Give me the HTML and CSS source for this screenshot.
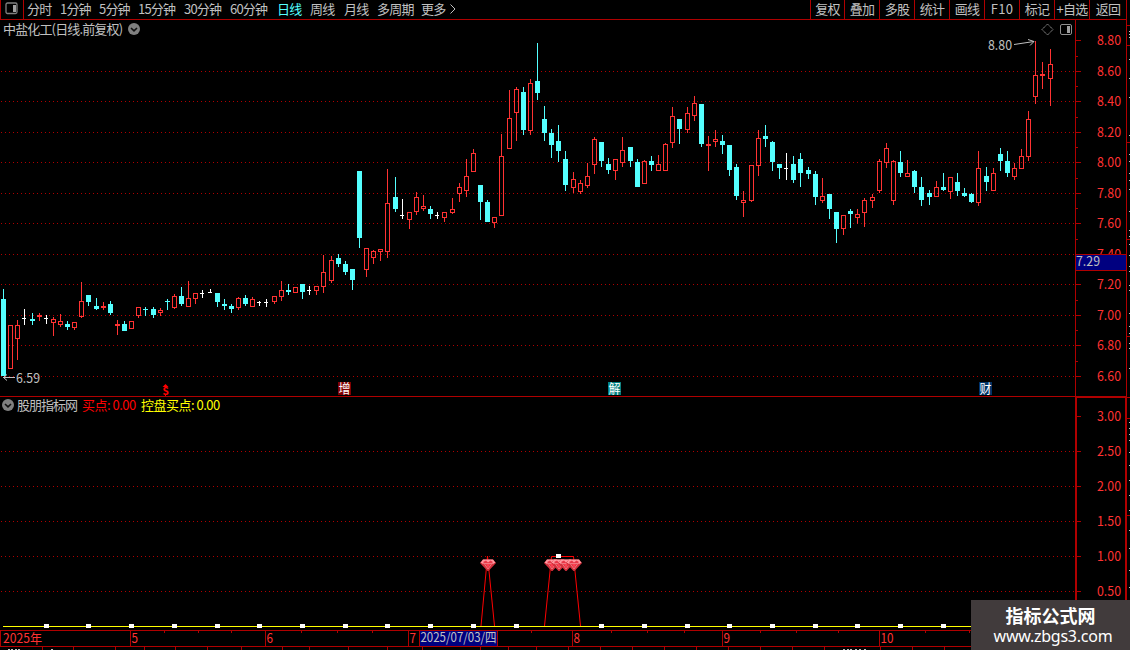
FILE: index.html
```html
<!DOCTYPE html>
<html lang="zh-CN">
<head>
<meta charset="utf-8">
<title>中盐化工 日线</title>
<link rel="stylesheet" href="styles.css">
</head>
<body>
<div class="terminal">
  <header class="toolbar">
    <div class="layout-toggle">
      <svg width="14" height="13" viewBox="0 0 14 13"><rect x="1" y="1" width="11" height="10.5" rx="1.5" fill="none" stroke="#808080" stroke-width="1.3"/><rect x="8" y="3" width="3" height="7" fill="#a0a0a0"/></svg>
    </div>
    <nav class="periods">
      <span>分时</span><span>1分钟</span><span>5分钟</span><span>15分钟</span><span>30分钟</span><span>60分钟</span><span class="active">日线</span><span>周线</span><span>月线</span><span>多周期</span><span class="more">更多<svg width="6" height="10" viewBox="0 0 6 10"><path d="M.5 .5L5 5L.5 9.500" fill="none" stroke="#c0c0c0"/></svg></span>
    </nav>
    <div class="tools">
      <span>复权</span><span>叠加</span><span>多股</span><span>统计</span><span>画线</span><span class="latin">F10</span><span>标记</span><span>+自选</span><span>返回</span>
    </div>
  </header>

  <section class="panel price">
    <svg id="price" class="plot" width="1130" height="377" viewBox="0 20 1130 377"></svg>
    <div class="panel-title">
      <span class="stock">中盐化工(日线.前复权)</span>
      <svg class="drop" width="12" height="12" viewBox="0 0 12 12"><circle cx="6" cy="6" r="6"/><path d="M3 5L6 7.800L9 5"/></svg>
    </div>
  </section>

  <section class="panel indicator">
    <svg id="signal" class="plot" width="1130" height="253" viewBox="0 397 1130 253"></svg>
    <div class="panel-title">
      <svg class="drop" width="12" height="12" viewBox="0 0 12 12"><circle cx="6" cy="6" r="6"/><path d="M3 5L6 7.800L9 5"/></svg>
      <span class="source">股朋指标网</span>
      <span class="buy">买点: 0.00</span>
      <span class="control">控盘买点: 0.00</span>
    </div>
  </section>

  <aside class="watermark">
    <strong>指标公式网</strong>
    <span>www.zbgs3.com</span>
  </aside>
</div>
<script src="chart.js"></script>
</body>
</html>
```
FILE: styles.css
```css
* { box-sizing: border-box; }
body {
  margin: 0;
  background: #000;
  color: #c0c0c0;
  font-family: "Noto Sans CJK SC", "Noto Sans", sans-serif;
  font-size: 13px;
  overflow: hidden;
}
.terminal {
  position: relative;
  width: 1130px;
  height: 650px;
  display: grid;
  grid-template-rows: 20px 377px 253px;
  overflow: hidden;
}
.toolbar {
  display: flex;
  width: 1127px;
  height: 20px;
  border-bottom: 1px solid #b00000;
  line-height: 17px;
  letter-spacing: -0.8px;
  white-space: nowrap;
}
.layout-toggle {
  width: 24px;
  padding: 2px 0 0 4px;
  border-left: 1px solid #b00000;
  border-right: 1px solid #b00000;
  line-height: 0;
}
.periods {
  display: grid;
  grid-template-columns: 33px 39px 39px 46px 46px 47px 33px 34px 33px 44px 40px;
  padding-left: 3px;
  flex: 1;
}
.active { color: #54ffff; }
.more { display: flex; gap: 5px; }
.more svg { margin-top: 4px; }
.tools {
  display: grid;
  grid-template-columns: 34px 35px 35px 35px 35px 35px 35px 35px 38px;
  text-align: center;
}
.tools span { border-left: 1px solid #b00000; }
.tools span:last-child { border-right: 1px solid #b00000; }
.tools .latin { letter-spacing: 0.3px; }
.panel { display: grid; }
.plot, .panel-title { grid-area: 1 / 1; }
.plot { display: block; }
.panel-title {
  display: flex;
  align-items: center;
  align-self: start;
  justify-self: start;
  height: 18px;
  line-height: 18px;
  letter-spacing: -0.8px;
  white-space: nowrap;
  z-index: 1;
}
.price .panel-title { padding-left: 3px; }
.stock { width: 125px; letter-spacing: -0.85px; }
.indicator .panel-title { padding-left: 2px; height: 16px; line-height: 16px; }
.drop circle { fill: #808080; }
.drop path { fill: none; stroke: #101010; stroke-width: 1.6; }
.source { width: 65px; margin-left: 3px; letter-spacing: -1px; }
.buy { width: 59px; color: #f00; letter-spacing: -0.5px; }
.control { color: #ff0; letter-spacing: -0.5px; }
.plot text { font-size: 13px; }
.scale { fill: #ff3232; }
.note { fill: #c0c0c0; }
.tag { fill: #fff; }
.frame { fill: #b00000; }
.grid { stroke: #b00000; stroke-dasharray: 1 3; shape-rendering: crispEdges; }
.up { fill: none; stroke: #ff3232; }
.up-fill { fill: #ff3232; }
.down-fill { fill: #54ffff; }
.flat-fill { fill: #fff; }
.arrow { fill: none; stroke: #c0c0c0; }
.signal-line { fill: none; stroke: #f00; }
.watermark {
  position: absolute;
  right: 0;
  bottom: 0;
  width: 159px;
  height: 50px;
  padding-top: 3px;
  background: #413b3c;
  color: #fff;
  text-align: center;
  z-index: 2;
}
.watermark strong { display: block; font-size: 18px; line-height: 24px; }
.watermark span { display: block; padding-left: 5px; font: 16px/18px "Noto Sans", sans-serif; letter-spacing: -0.25px; }
```
FILE: chart.js
```js
// Each candle: centre x, high, body top, body bottom, low, kind (r rising, c falling, w unchanged)
const candles = `3 289 299 376 376 c;10 325 325 369 369 r;17 320 325 339 360 r;24 309 318 319 325 w;32 313 319 321 325 c;39 313 315 317 321 r;46 315 318 319 324 w;53 317 319 323 336 r;60 314 321 325 327 r;67 321 324 327 330 c;74 322 322 328 330 r;81 282 301 317 318 r;88 295 295 302 306 c;96 298 306 309 310 c;103 302 306 308 310 r;110 301 304 313 315 c;117 320 324 326 335 r;124 321 324 331 331 c;131 321 321 329 329 r;138 307 307 316 318 r;145 307 309 310 316 c;153 307 309 315 318 c;160 308 310 313 316 r;167 299 301 302 310 c;174 294 296 308 309 r;181 287 296 304 306 c;188 281 298 307 307 r;195 293 293 299 304 r;202 290 293 294 298 w;210 289 292 293 293 w;217 293 293 302 307 c;224 299 304 306 310 c;231 304 306 309 313 c;238 297 298 308 310 r;245 295 298 304 306 c;252 297 299 307 307 r;259 301 302 303 306 w;266 299 302 303 307 w;274 296 296 302 304 r;281 281 290 297 301 r;288 284 290 292 295 c;295 287 287 293 293 r;302 284 284 292 299 c;309 286 290 291 295 w;316 286 286 291 295 r;323 255 272 287 293 r;331 256 260 281 283 r;338 254 258 264 267 c;345 261 264 272 275 c;352 269 269 280 290 c;359 171 171 238 248 c;366 248 248 270 277 r;373 250 251 258 264 r;380 249 249 252 261 r;387 169 203 252 258 r;395 177 197 209 212 c;402 199 215 216 219 w;409 212 212 220 229 r;416 192 197 212 215 r;423 195 206 209 211 r;430 206 209 214 219 c;437 212 215 216 219 w;444 212 212 218 222 r;452 198 209 213 214 r;459 183 187 194 202 r;466 159 176 191 197 r;473 149 153 172 172 r;480 185 185 202 220 c;487 200 202 222 222 c;494 217 217 223 228 r;501 134 156 216 216 r;509 90 118 149 149 r;516 87 89 113 141 r;523 87 92 130 135 c;530 79 83 131 135 r;537 43 81 93 100 c;544 106 119 133 141 c;551 129 133 145 158 c;558 125 141 151 162 c;565 151 159 185 191 c;573 172 179 188 193 r;580 180 183 192 194 r;587 163 176 186 188 r;594 137 139 165 174 r;601 142 142 161 167 c;608 158 164 170 174 c;615 159 159 171 180 r;622 137 150 163 167 r;630 147 147 161 167 c;637 159 162 187 187 c;644 160 161 184 184 r;651 156 161 165 171 c;658 155 164 171 171 r;665 143 144 171 171 r;672 107 116 143 148 r;679 119 119 129 144 c;687 107 113 130 133 r;694 96 103 116 121 r;701 104 104 144 147 c;708 136 144 146 171 r;715 130 139 142 147 r;722 135 141 145 154 c;729 145 145 170 176 c;736 164 167 196 200 c;743 191 200 203 217 r;751 165 165 201 202 r;758 130 138 166 176 r;765 125 136 139 147 c;772 141 142 162 171 c;779 164 164 168 179 c;786 153 168 169 180 w;793 156 164 180 183 c;800 153 159 173 187 c;808 167 170 174 179 c;815 171 174 197 205 c;822 178 196 201 203 r;829 194 194 209 219 c;836 212 212 229 243 c;843 215 215 229 235 r;850 209 211 214 228 c;857 209 214 218 224 r;864 198 200 213 227 r;872 194 197 201 208 r;879 159 161 191 193 r;886 143 148 163 168 r;893 160 161 201 205 r;900 151 162 173 177 c;907 160 173 177 177 r;914 170 171 187 193 c;921 177 187 200 206 c;929 190 193 197 205 c;936 181 187 197 197 r;943 173 187 190 191 c;950 177 177 192 199 r;957 173 182 191 196 c;964 188 193 196 197 c;971 193 194 202 203 c;978 151 168 203 206 r;986 167 176 182 191 c;993 168 173 191 191 r;1000 148 154 161 171 c;1007 151 161 173 177 c;1014 163 168 177 180 r;1021 149 156 169 169 r;1028 111 119 157 161 r;1035 41 75 97 104 r;1042 62 74 76 89 r;1050 49 64 79 106 r`;

const rect = (x, y, w, h, cls) => `<rect x="${x}" y="${y}" width="${w}" height="${h}" class="${cls}"/>`;
const text = (x, y, w, s, cls) => `<text x="${x}" y="${y}" class="${cls}" textLength="${w}" lengthAdjust="spacingAndGlyphs">${s}</text>`;
const dots = y => `<line class="grid" x1="1" x2="1074" y1="${y + .5}" y2="${y + .5}"/>`;

function candle(row) {
  const [x, hi, top, bot, lo] = row.split(' ').map(Number);
  const kind = row.slice(-1);
  if (kind === 'w') return rect(x, hi, 1, lo - hi, 'flat-fill') + rect(x - 2, top, 4, 1, 'flat-fill');
  if (kind === 'c') return rect(x, hi, 1, lo - hi, 'down-fill') + rect(x - 2, top, 5, bot - top, 'down-fill');
  let out = rect(x, hi, 1, top - hi, 'up-fill') + rect(x, bot, 1, lo - bot, 'up-fill');
  out += bot - top <= 2
    ? rect(x - 2, top, 5, 2, 'up-fill')
    : rect(x - 1.5, top + .5, 4, bot - top - 1, 'up');
  return out;
}

function stripMarks(reds, greys) {
  return reds.map(y => rect(1127, y, 3, 1, 'frame')).join('') +
    greys.map(y => rect(1129, y, 1, 1, 'note')).join('');
}

function drawPrice() {
  let s = '';
  const ys = [40, 71, 101, 132, 162, 193, 223, 254, 284, 315, 345, 376];
  s += rect(1075, 20, 1, 377, 'frame') + rect(1126, 20, 1, 377, 'frame') + rect(0, 396, 1127, 1, 'frame');
  ys.forEach((y, i) => {
    if (i) s += dots(y);
    s += rect(1076, y, 5, 1, 'frame');
    if (i < 11) s += rect(1076, Math.floor((y + ys[i + 1] + 1) / 2), 2, 1, 'frame');
    s += text(1097, y + 5, 24, (8.8 - i * .2).toFixed(2), 'scale');
  });
  s += rect(1075, 254, 52, 17, 'frame') + '<rect x="1076" y="255" width="50" height="15" fill="#000080"/>' + text(1076, 266, 24, '7.29', 'note');
  s += candles.split(';').map(candle).join('');
  s += text(988, 50, 24, '8.80', 'note') + '<path class="arrow" d="M1014 44.500L1034 41.500M1028 39.500L1034 41.500L1030 45.500"/>';
  s += text(16, 383, 24, '6.59', 'note') + '<path class="arrow" d="M3 377.500H15M7 374.500L3.500 377.500L7 380.500"/>';
  s += '<path d="M1042 29.500L1047.500 24L1053 29.500L1047.500 35Z" fill="none" stroke="#909090" stroke-dasharray="1.500 .5"/>';
  s += '<rect x="1060.500" y="24.500" width="11" height="10" rx="1.500" fill="none" stroke="#909090"/><rect x="1067" y="26" width="3" height="7" fill="#a0a0a0"/>';
  s += '<path d="M162.500 387L165.500 384L168.500 387Z" fill="#f00"/><text x="162.500" y="395" fill="#f00" font-weight="bold" style="font-size:10px">S</text><path d="M165 394h1v2h-1z" fill="#f00"/>';
  [[338, '增', '#800000'], [608, '解', '#008080'], [979, '财', '#003366']].forEach(([x, t, c]) => {
    s += `<rect x="${x}" y="382" width="13" height="13" fill="${c}"/>` + text(x + .5, 393, 12, t, 'tag');
  });
  s += stripMarks([25, 45, 142, 239, 336], [31, 34, 37, 59, 78, 97, 135, 154, 161, 173, 180, 189, 211, 230, 236, 244, 255, 266, 271, 285, 290, 313, 326, 333, 343, 348, 368]);
  document.getElementById('price').innerHTML = s;
}

function gem(x) {
  return `<g transform="translate(${x - 8} 559)"><path d="M3 .5H13L16 4L8.500 12H7.500L0 4Z" fill="#d4303c"/><path d="M3 .5H13L15.500 4H.5Z" fill="#ff98a0"/><path d="M3 3L6 1.500L8 3.500L10.500 1.500L13 3L11 5H5Z" fill="#e83848"/><path d="M2 4.500H14M4.500 5L8 10L11.500 5" fill="none" stroke="#f89098" stroke-width=".7"/><path d="M6 5H10L8 9Z" fill="#ff4052"/></g>`;
}

function drawSignal() {
  let s = '';
  s += rect(1075, 397, 2, 233, 'frame') + rect(1125, 397, 2, 253, 'frame') + rect(1075, 397, 52, 1, 'frame');
  [416, 451, 486, 521, 556, 591].forEach((y, i) => {
    if (i) s += dots(y);
    s += rect(1077, y, 4, 1, 'frame') + text(1097, y + 5, 24, (3 - i * .5).toFixed(2), 'scale');
  });
  s += '<path class="signal-line" d="M481 626L487.500 556L494.500 626M544.500 626L551.500 556.500H573.500L580.500 626"/>';
  s += [488, 552, 559, 566, 574].map(gem).join('');
  s += '<rect x="3" y="626" width="1072" height="1" fill="#ff0"/>';
  [44, 86, 129, 172, 215, 257, 300, 343, 385, 428, 471, 514, 556, 599, 642, 685, 727, 770, 813, 855, 898, 941].forEach(x => {
    s += rect(x, x === 556 ? 554 : 624, 5, 4, 'flat-fill');
  });
  s += rect(0, 630, 1126, 1, 'frame') + rect(0, 646, 1126, 1, 'frame') + rect(0, 630, 1, 17, 'frame');
  [130, 265, 408, 572, 722, 879].forEach((x, i) => {
    s += rect(x, 631, 1, 15, 'frame') + text(x + 1.5, 643, i === 5 ? 13 : 6.5, i + 5, 'scale');
  });
  s += text(3, 643, 39, '2025年', 'scale');
  [164, 198, 231, 301, 337, 372, 531, 611, 647, 684, 760, 796, 838, 925, 969].forEach(x => { s += rect(x, 631, 1, 2, 'frame'); });
  s += rect(419, 630, 79, 17, 'frame') + '<rect x="420" y="631" width="77" height="15" fill="#000080"/>' + text(420.5, 642, 76, '2025/07/03/四', 'note');
  [42, 73, 115, 144, 175, 207, 241, 282, 309, 348, 387, 422, 480, 508, 536, 568, 600, 632, 664, 696, 728, 760, 792, 824, 880, 912, 944].forEach(x => { s += rect(x, 647, 1, 3, 'frame'); });
  [8, 11, 15, 18, 51, 843, 847, 850, 855, 859, 864].forEach(x => { s += rect(x, 649, 2, 1, 'note'); });
  s += stripMarks([397, 418, 515], [422, 428, 434, 440, 452, 465, 480, 495, 510, 530, 548, 570, 587]);
  document.getElementById('signal').innerHTML = s;
}

drawPrice();
drawSignal();
```
